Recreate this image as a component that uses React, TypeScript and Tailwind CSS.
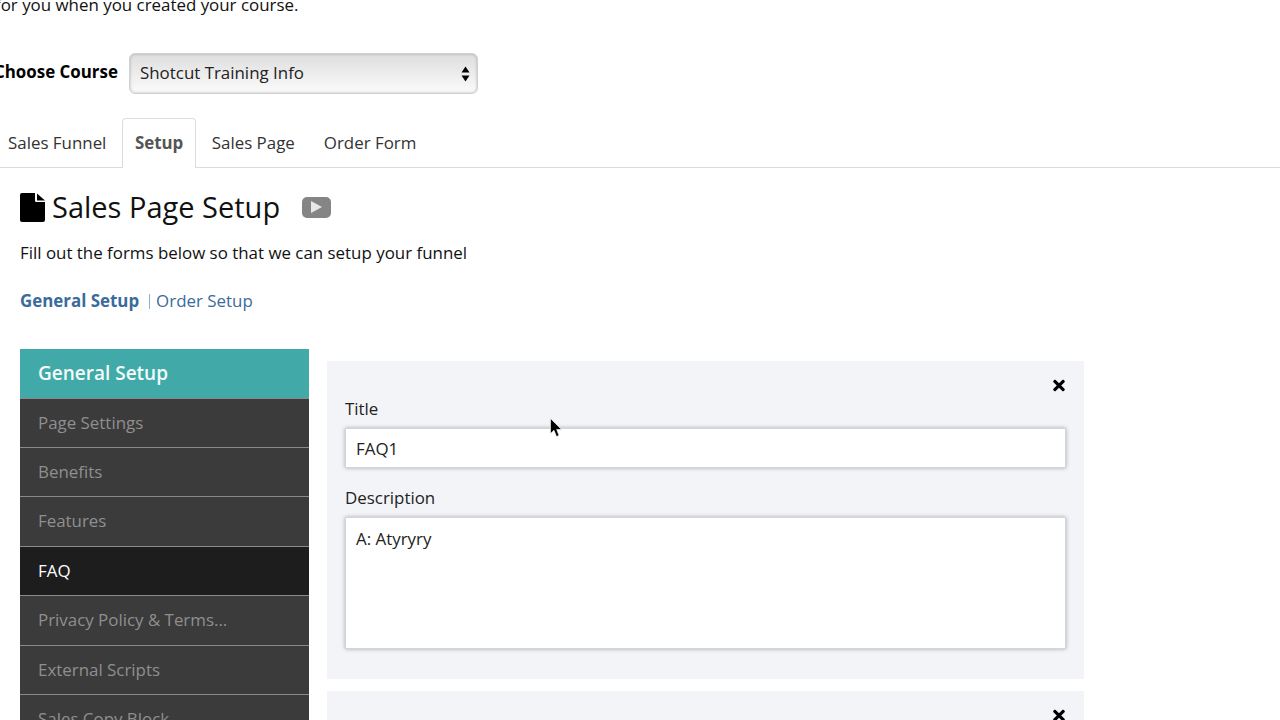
import { FaTimes } from "react-icons/fa"

const menu = ["Page Settings", "Benefits", "Features", "FAQ", "Privacy Policy & Terms...", "External Scripts", "Sales Copy Block"]

const App = () => {
    return (
        <div className="relative h-[720px] w-[1280px] overflow-hidden bg-white font-['Open_Sans',sans-serif] text-[16.9px] text-[#111]">
            <p className="-ml-[5px] -mt-[7px] h-[24px] leading-[24px]">for you when you created your course.</p>

            <div className="mt-[36px] -ml-[6px] flex items-center">
                <span className="-mt-[3px] w-[135px] font-bold text-black">Choose Course</span>
                <div className="flex h-[41px] w-[349px] items-center justify-between rounded-[6px] border border-[#d0d0d0] bg-gradient-to-b from-[#dedede] to-[#fbfbfb] pl-[10px] pr-[7px] shadow-[inset_0_0_3px_rgba(0,0,0,0.25)]">
                    <span className="-mt-[1px] text-[#222]">Shotcut Training Info</span>
                    <svg width="9" height="16" viewBox="0 0 9 16" className="fill-black">
                        <path d="M4.5 0.5 L8.5 6.5 H0.5 Z" />
                        <path d="M4.5 15.5 L8.5 9.5 H0.5 Z" />
                    </svg>
                </div>
            </div>

            <div className="mt-[24px] -ml-[5px] flex h-[50px] w-[1285px] gap-[3px] border-b border-[#dcdcdc] text-[#333]">
                <div className="px-[13px] pt-[12px]">Sales Funnel</div>
                <div className="h-[50px] rounded-t-[4px] border border-b-0 border-[#dcdcdc] bg-white px-[11.5px] pt-[11px] font-bold text-[#555]">Setup</div>
                <div className="px-[13px] pt-[12px]">Sales Page</div>
                <div className="px-[13px] pt-[12px]">Order Form</div>
            </div>

            <div className="ml-[20px]">
                <div className="mt-[22px] flex h-[34px] items-center">
                    <svg width="25" height="29" viewBox="0 0 25 29" className="fill-black">
                        <path d="M2 0 H15 V7.5 a1.5 1.5 0 0 0 1.5 1.5 H25 V27 a2 2 0 0 1 -2 2 H2 a2 2 0 0 1 -2 -2 V2 a2 2 0 0 1 2 -2 Z" />
                        <path d="M17 0.5 L25 7.5 H17 Z" />
                    </svg>
                    <h1 className="ml-[7px] text-[29px] leading-[34px] text-[#111]">Sales Page Setup</h1>
                    <div className="ml-[22px] flex h-[21px] w-[29px] items-center justify-center rounded-[5px] bg-[#858585]">
                        <svg width="11" height="12" viewBox="0 0 11 12" className="fill-[#e8e8e8]">
                            <path d="M0 0 L11 6 L0 12 Z" />
                        </svg>
                    </div>
                </div>
                <p className="mt-[17px] h-[24px] leading-[24px]">Fill out the forms below so that we can setup your funnel</p>
                <div className="mt-[24px] flex h-[24px] items-center leading-[24px] text-[#3a6b9b]">
                    <span className="font-bold">General Setup</span>
                    <span className="ml-[10px] mr-[6px] h-[15px] w-px bg-[#8fb0cc]"></span>
                    <span>Order Setup</span>
                </div>

                <div className="mt-[36px] flex items-start gap-[18px]">
                    <div className="w-[289px]">
                        <div className="flex h-[48.5px] items-center bg-[#41aaa8] pl-[18px] text-[19px] font-semibold text-[#f2fbfa]">General Setup</div>
                        {menu.map((item) => (
                            <div
                                key={item}
                                className={
                                    item === "FAQ"
                                        ? "flex h-[49.45px] items-center border-t border-[#8a8a8a] bg-[#1d1d1d] pb-[1px] pl-[18px] text-white"
                                        : "flex h-[49.45px] items-center border-t border-[#8a8a8a] bg-[#3b3b3b] pb-[1px] pl-[18px] text-[#8f8f8f]"
                                }
                            >
                                {item}
                            </div>
                        ))}
                    </div>

                    <div className="mt-[12px] w-[757px]">
                        <div className="h-[318px] bg-[#f3f4f8] px-[18px] pt-[16px]">
                            <div className="flex h-[17px] justify-end">
                                <FaTimes className="h-[17px] w-[14px] text-black" />
                            </div>
                            <label className="mt-[3px] block h-[24px] leading-[24px] text-[#222]">Title</label>
                            <input
                                readOnly
                                value="FAQ1"
                                className="mt-[7px] block h-[40px] w-[721px] border border-[#d4d4dc] bg-white px-[10px] text-[#222] shadow-[0_0_4px_rgba(0,0,0,0.3)] outline-none"
                            />
                            <label className="mt-[18px] block h-[24px] leading-[24px] text-[#222]">Description</label>
                            <textarea
                                readOnly
                                value="A: Atyryry"
                                className="mt-[7px] block h-[132px] w-[721px] resize-none border border-[#d4d4dc] bg-white px-[10px] py-[9px] leading-[24px] text-[#222] shadow-[0_0_4px_rgba(0,0,0,0.3)] outline-none"
                            />
                        </div>
                        <div className="mt-[12px] h-[120px] bg-[#f3f4f8] px-[18px] pt-[16px]">
                            <div className="flex h-[17px] justify-end">
                                <FaTimes className="h-[17px] w-[14px] text-black" />
                            </div>
                        </div>
                    </div>
                </div>
            </div>

            <svg width="13" height="20" viewBox="0 0 13 20" className="absolute left-[550px] top-[418px]">
                <path d="M0.5 0.5 V15.5 L4 12.3 L6.5 18.5 L9 17.5 L6.7 11.5 H11.5 Z" fill="#000" stroke="#fff" strokeWidth="0.6" />
            </svg>
        </div>
    )
}

export default App
